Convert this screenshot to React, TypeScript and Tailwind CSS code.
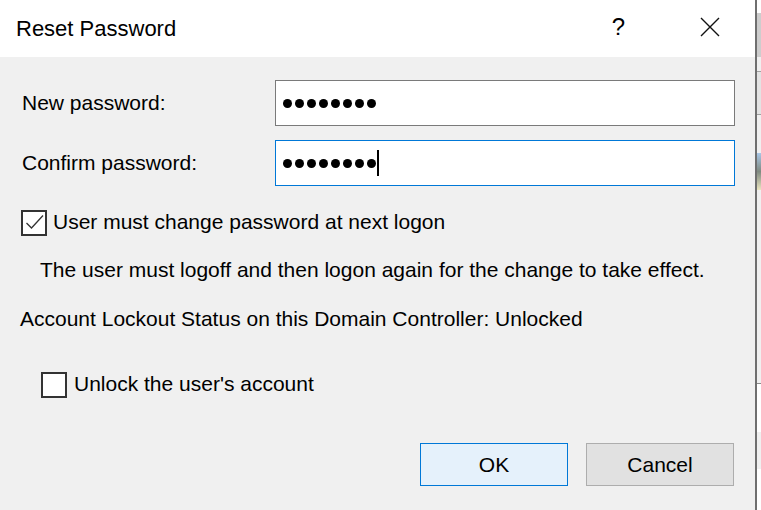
import { useState } from 'react';

const FONT = "font-['Liberation_Sans',Arial,sans-serif]";

function Dots({ count }: { count: number }) {
  return (
    <div className="flex items-center gap-[3px]">
      {Array.from({ length: count }).map((_, i) => (
        <span key={i} className="block h-[9px] w-[9px] rounded-full bg-black" />
      ))}
    </div>
  );
}

function CheckBox({ checked }: { checked: boolean }) {
  return (
    <span className="flex h-[26px] w-[26px] shrink-0 items-center justify-center border-2 border-[#333333] bg-white">
      {checked && (
        <svg width="22" height="22" viewBox="0 0 22 22" fill="none">
          <path d="M3.5 11 L8.5 16 L20 3.5" stroke="#333333" strokeWidth="1.3" />
        </svg>
      )}
    </span>
  );
}

export default function App() {
  const [mustChange, setMustChange] = useState(true);
  const [unlock, setUnlock] = useState(false);

  return (
    <div className={`flex h-[510px] w-[761px] overflow-hidden text-black ${FONT}`}>
      {/* dialog */}
      <div className="flex w-[755px] flex-col">
        <div className="flex h-[57px] shrink-0 items-center bg-white pl-[16px]">
          <span className="text-[22px] leading-[26px]">Reset Password</span>
          <div className="ml-auto flex h-full items-center">
            <span className="flex h-full w-[91px] items-center justify-center pb-[4px] text-[24px]">?</span>
            <span className="flex h-full w-[91px] items-center justify-center pb-[3px]">
              <svg width="20" height="20" viewBox="0 0 20 20" fill="none">
                <path d="M1 1 L19 19 M19 1 L1 19" stroke="#111" strokeWidth="1.4" />
              </svg>
            </span>
          </div>
        </div>

        <div className="flex flex-1 flex-col bg-[#f0f0f0] text-[21px] leading-[24px]">
          <div className="mt-[23px] flex items-center">
            <span className="w-[275px] shrink-0 pl-[22px]">New password:</span>
            <div className="flex h-[46px] w-[460px] items-center border border-[#7a7a7a] bg-white pl-[7px]">
              <Dots count={8} />
            </div>
          </div>

          <div className="mt-[14px] flex items-center">
            <span className="w-[275px] shrink-0 pl-[22px]">Confirm password:</span>
            <div className="flex h-[46px] w-[460px] items-center border border-[#0078d7] bg-white pl-[7px]">
              <Dots count={8} />
              <span className="ml-[1px] block h-[26px] w-[2px] bg-black" />
            </div>
          </div>

          <label
            className="mt-[24px] ml-[21px] flex cursor-default items-start gap-[6px]"
            onClick={() => setMustChange((v) => !v)}
          >
            <CheckBox checked={mustChange} />
            <span>User must change password at next logon</span>
          </label>

          <p className="mt-[22px] ml-[40px]">
            The user must logoff and then logon again for the change to take effect.
          </p>

          <p className="mt-[25px] ml-[20px]">
            Account Lockout Status on this Domain Controller: Unlocked
          </p>

          <label
            className="mt-[41px] ml-[41px] flex cursor-default items-start gap-[7px]"
            onClick={() => setUnlock((v) => !v)}
          >
            <CheckBox checked={unlock} />
            <span>Unlock the user's account</span>
          </label>

          <div className="mt-auto flex justify-end gap-[18px] pb-[24px] pr-[21px]">
            <button className="h-[43px] w-[148px] border border-[#0078d7] bg-[#e5f1fb]">OK</button>
            <button className="h-[43px] w-[148px] border border-[#adadad] bg-[#e1e1e1]">Cancel</button>
          </div>
        </div>
      </div>

      {/* window edge */}
      <div className="w-[2px] bg-[#6f6f6f]" />

      {/* sliver of the window behind */}
      <div className="flex w-[4px] flex-col">
        <div className="h-[13px] bg-white" />
        <div className="h-[44px] bg-[#cdcdcd]" />
        <div className="h-[14px] bg-[#f0f0f0]" />
        <div className="h-[1px] bg-[#a0a0a0]" />
        <div className="h-[42px] bg-[#e3e3e3]" />
        <div className="h-[1px] bg-[#a0a0a0]" />
        <div className="h-[38px] bg-[#f0f0f0]" />
        <div className="h-[37px] bg-gradient-to-b from-[#a9c7e8] via-[#7f8a80] to-[#ece6c0]" />
        <div className="h-[193px] bg-[#f0f0f0]" />
        <div className="h-[1px] bg-[#8a8a8a]" />
        <div className="h-[48px] bg-white" />
        <div className="h-[37px] bg-[#f0f0f0]" />
        <div className="flex-1 bg-white" />
      </div>
    </div>
  );
}
